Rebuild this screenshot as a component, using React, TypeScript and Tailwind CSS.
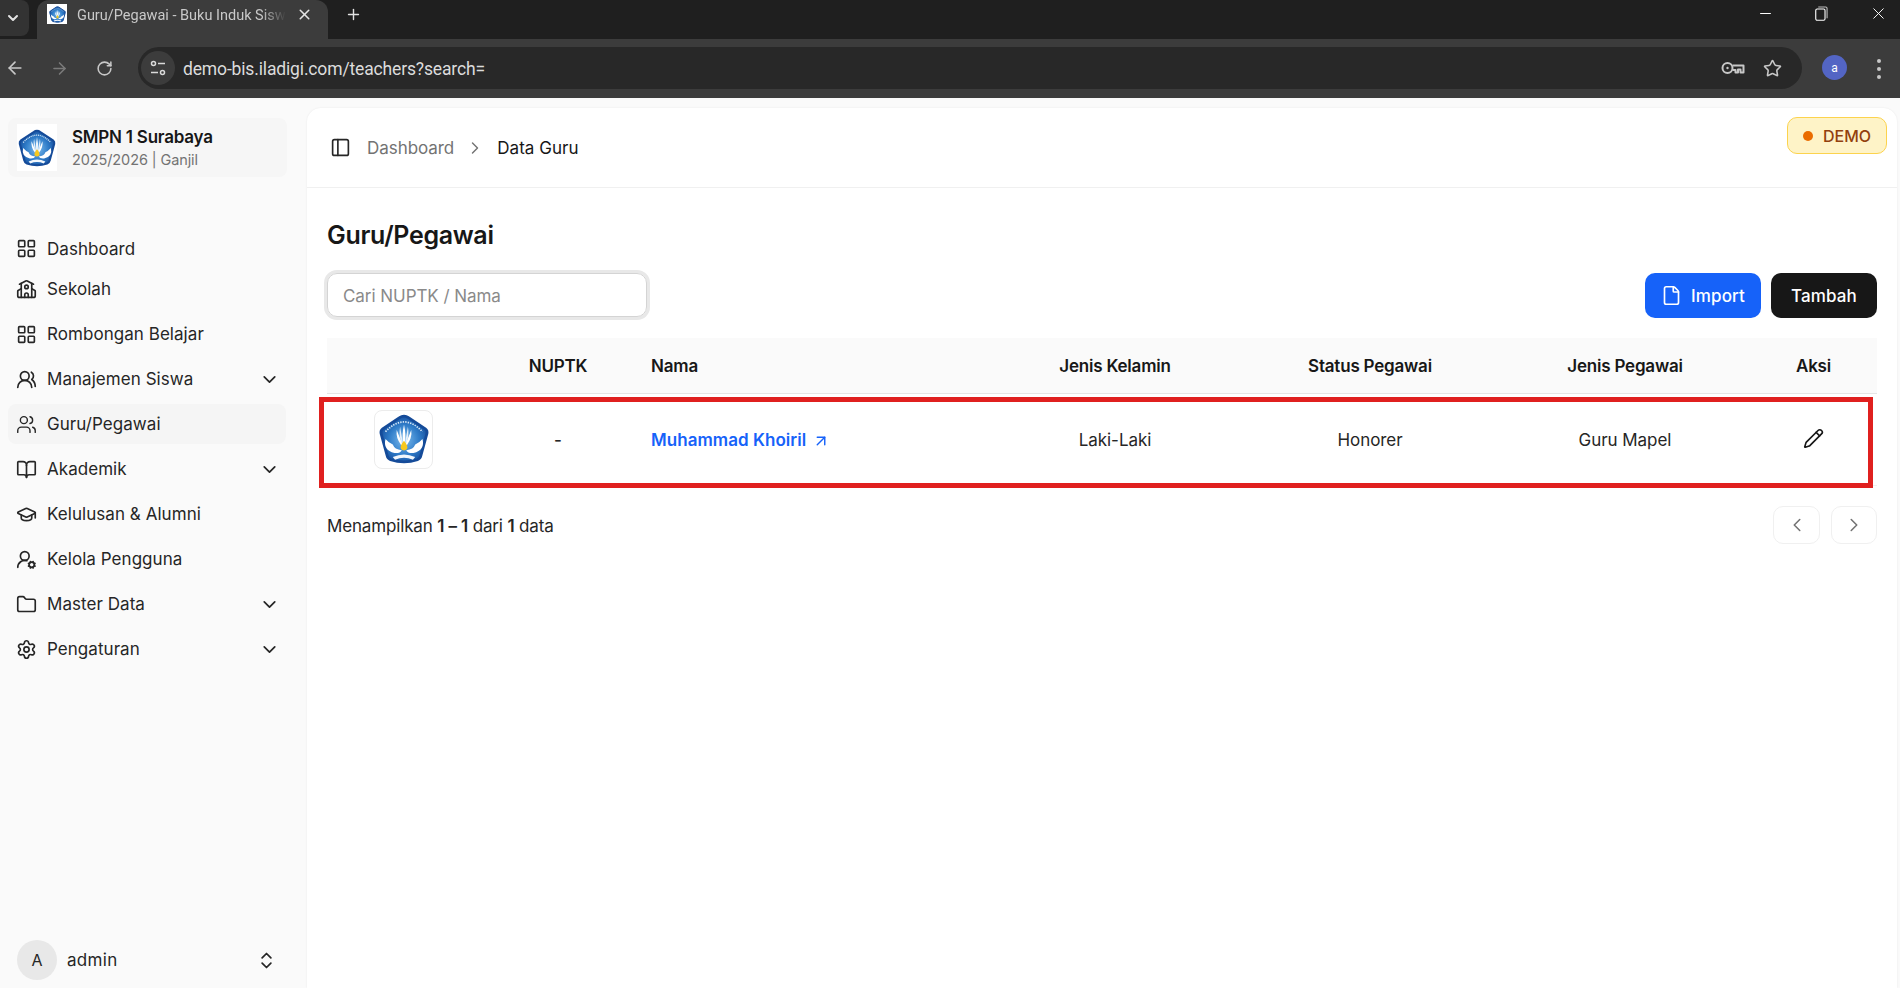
import {
  ArrowLeft,
  ArrowRight,
  ArrowUpRight,
  BookOpen,
  ChevronDown,
  ChevronLeft,
  ChevronRight,
  ChevronsUpDown,
  File,
  Folder,
  GraduationCap,
  LayoutGrid,
  Minus,
  PanelLeft,
  Pencil,
  Plus,
  RotateCw,
  School,
  Settings,
  Star,
  UserRoundCog,
  Users,
  UsersRound,
  X,
} from "lucide-react"
import type { ComponentType } from "react"

const sans = "font-['Inter','Liberation_Sans',sans-serif]"

type NavItem = {
  label: string
  icon: ComponentType<{ className?: string; strokeWidth?: number }>
  chevron?: boolean
  active?: boolean
  short?: boolean
}

const navItems: NavItem[] = [
  { label: "Dashboard", icon: LayoutGrid, short: true },
  { label: "Sekolah", icon: School },
  { label: "Rombongan Belajar", icon: LayoutGrid },
  { label: "Manajemen Siswa", icon: UsersRound, chevron: true },
  { label: "Guru/Pegawai", icon: Users, active: true },
  { label: "Akademik", icon: BookOpen, chevron: true },
  { label: "Kelulusan & Alumni", icon: GraduationCap },
  { label: "Kelola Pengguna", icon: UserRoundCog },
  { label: "Master Data", icon: Folder, chevron: true },
  { label: "Pengaturan", icon: Settings, chevron: true },
]

function TutWuriLogo({ className }: { className?: string }) {
  return (
    <svg viewBox="0 0 100 100" className={className}>
      <defs>
        <radialGradient id="shield" cx="50%" cy="52%" r="55%">
          <stop offset="0%" stopColor="#7dbcee" />
          <stop offset="60%" stopColor="#2f7cc8" />
          <stop offset="100%" stopColor="#164f9e" />
        </radialGradient>
      </defs>
      <path
        d="M50 9 Q54 9 58 12 L88 32 Q92 35 91 40 L80 80 Q79 85 74 87 Q50 95 26 87 Q21 85 20 80 L9 40 Q8 35 12 32 L42 12 Q46 9 50 9 Z"
        fill="url(#shield)"
        stroke="#154b99"
        strokeWidth="5"
      />
      <path d="M17 37 Q50 2 83 37" fill="none" stroke="#d6e8f7" strokeWidth="3" strokeDasharray="2.5 2" />
      <path d="M37 34 Q35 48 45 61 L48 61 Z" fill="#fff" />
      <path d="M50 24 Q46 42 48.5 59 L51.5 59 Q54 42 50 24 Z" fill="#fff" />
      <path d="M63 34 Q65 48 55 61 L52 61 Z" fill="#fff" />
      <path d="M43 28 Q40 44 46.5 60 L48.5 60 Z M57 28 Q60 44 53.5 60 L51.5 60 Z" fill="#e6eff8" />
      <path d="M50 53 Q58 62 55.5 68 Q50 73 44.5 68 Q42 62 50 53 Z" fill="#f6c81e" />
      <path d="M17 50 Q12 70 33 75 Q43 76 46 70 Q33 69 30 60 Q23 57 17 50 Z" fill="#fff" />
      <path d="M83 50 Q88 70 67 75 Q57 76 54 70 Q67 69 70 60 Q77 57 83 50 Z" fill="#fff" />
      <path d="M30 82 Q50 73 70 82 L66 87 Q50 80 34 87 Z" fill="#f2f7fc" />
    </svg>
  )
}

function KeyIcon() {
  return (
    <svg viewBox="0 0 24 14" className="h-[14px] w-[24px]" fill="none" stroke="#c7c7c7" strokeWidth="2">
      <circle cx="6.5" cy="7" r="5" />
      <circle cx="6.5" cy="7" r="1.2" fill="#c7c7c7" strokeWidth="0" />
      <path d="M11.5 4.5 H22.5 V11.5 H19.5 V8.5 H17 V11.5 H14.5 V9 H11.5" strokeLinejoin="round" />
    </svg>
  )
}

function RestoreIcon() {
  return (
    <svg viewBox="0 0 14 16" className="h-[15px] w-[13px]" fill="none" stroke="#fff" strokeWidth="1.2">
      <rect x="0.8" y="3.2" width="10" height="12" rx="1.5" />
      <path d="M3.5 1 H11.5 Q13 1 13 2.5 V13" stroke="#bdbdbd" />
    </svg>
  )
}

function TuneIcon() {
  return (
    <svg viewBox="0 0 16 16" className="h-4 w-4" fill="none" stroke="#dadada" strokeWidth="1.5">
      <circle cx="3.5" cy="3.5" r="2" />
      <path d="M8 3.5 H15 M1 12.5 H8" />
      <circle cx="12.5" cy="12.5" r="2" />
    </svg>
  )
}

function BrowserChrome() {
  return (
    <div className="shrink-0 font-['Roboto','Liberation_Sans',sans-serif] text-[#e3e3e3]">
      <div className="flex h-[39px] items-end bg-[#1f1f1f]">
        <div className="mb-[3px] flex h-[36px] w-[29px] items-center justify-start rounded-r-lg bg-[#333333] pl-[5px]">
          <ChevronDown className="h-4 w-4 text-[#e3e3e3]" strokeWidth={3} />
        </div>
        <div className="ml-[8px] flex h-[39px] w-[291px] items-center rounded-t-xl bg-[#3c3c3c] pb-[11px] pl-[10px] pr-[15px]">
          <div className="flex h-[20px] w-[20px] shrink-0 items-center justify-center bg-white">
            <TutWuriLogo className="h-[19px] w-[19px]" />
          </div>
          <span className="ml-[10px] w-[209px] overflow-hidden whitespace-nowrap pt-[3px] text-[14.5px] text-[#c9c9c9] [mask-image:linear-gradient(to_right,black_88%,transparent)]">
            Guru/Pegawai - Buku Induk Siswa
          </span>
          <X className="ml-auto h-[17px] w-[17px] shrink-0 text-[#e3e3e3]" strokeWidth={2.2} />
        </div>
        <Plus className="mb-[16px] ml-[17px] h-[17px] w-[17px] text-[#e3e3e3]" strokeWidth={2} />
        <div className="mb-[16px] ml-auto flex items-center gap-[40px] pr-[12px]">
          <Minus className="mr-[1px] h-[17px] w-[17px] text-white" strokeWidth={1.4} />
          <RestoreIcon />
          <X className="ml-[1px] h-[19px] w-[19px] text-white" strokeWidth={1.2} />
        </div>
      </div>
      <div className="flex h-[59px] items-start bg-[#3c3c3c] pt-[8px]">
        <div className="flex h-[42px] w-[138px] shrink-0 items-center pl-[5px]">
          <ArrowLeft className="h-[20px] w-[20px] text-[#c7c7c7]" strokeWidth={2} />
          <ArrowRight className="ml-[25px] h-[19px] w-[19px] text-[#7a7a7a]" strokeWidth={2} />
          <RotateCw className="ml-[27px] h-[17px] w-[17px] text-[#c7c7c7]" strokeWidth={2.2} />
        </div>
        <div className="flex h-[42px] w-[1664px] items-center rounded-full bg-[#282828] pl-[3px] pr-[20px]">
          <div className="flex h-[34px] w-[34px] items-center justify-center rounded-full bg-[#3c3c3c]">
            <TuneIcon />
          </div>
          <span className="ml-[8px] pt-[2px] text-[17.5px] tracking-[-0.15px] text-[#dcdcdc]">demo-bis.iladigi.com/teachers?search=</span>
          <div className="ml-auto flex items-center gap-[18px]">
            <KeyIcon />
            <Star className="h-[19px] w-[19px] text-[#c7c7c7]" strokeWidth={2} />
          </div>
        </div>
        <div className="ml-[20px] mt-[8px] flex h-[25px] w-[25px] items-center justify-center rounded-full bg-[#5365c4] text-[12px] text-white">
          a
        </div>
        <div className="ml-[30px] mt-[12px] flex flex-col gap-[4px]">
          <span className="h-[4px] w-[4px] rounded-full bg-[#c7c7c7]" />
          <span className="h-[4px] w-[4px] rounded-full bg-[#c7c7c7]" />
          <span className="h-[4px] w-[4px] rounded-full bg-[#c7c7c7]" />
        </div>
      </div>
    </div>
  )
}

function Sidebar() {
  return (
    <aside className="flex w-[307px] shrink-0 flex-col px-2 pb-2 pt-[20px]">
      <div className="flex h-[59px] w-[279px] items-center gap-[15px] rounded-lg bg-[#f6f6f6] pl-[9px]">
        <div className="flex h-[47px] w-[40px] items-center justify-center bg-white">
          <TutWuriLogo className="h-[42px] w-[42px] shrink-0" />
        </div>
        <div>
          <div className="text-[17px] font-semibold leading-[21px] tracking-[-0.22px] text-[#171717]">SMPN 1 Surabaya</div>
          <div className="pt-[2px] text-[14.5px] leading-[19px] tracking-[-0.1px] text-[#737373]">2025/2026 | Ganjil</div>
        </div>
      </div>
      <nav className="mt-[55px] flex flex-col gap-[5px]">
        {navItems.map((item) => {
          const Icon = item.icon
          return (
            <div
              key={item.label}
              className={`flex w-[278px] items-center rounded-lg pl-[8px] pr-[6px] ${item.short ? "h-[32px]" : "h-[40px]"} ${item.active ? "bg-[#f5f5f5]" : ""}`}
            >
              <Icon className="h-[21px] w-[21px] shrink-0 text-[#262626]" strokeWidth={item.active ? 1.6 : 1.9} />
              <span className={`ml-[10px] text-[17px] tracking-[0.05px] text-[#262626] ${item.short ? "pt-[3px]" : "pt-[1px]"}`}>{item.label}</span>
              {item.chevron && <ChevronDown className="ml-auto h-[21px] w-[21px] text-[#262626]" strokeWidth={2} />}
            </div>
          )
        })}
      </nav>
      <div className="mt-auto flex items-center pl-[9px] pr-[22px]">
        <div className="flex h-[40px] w-[40px] items-center justify-center rounded-full bg-[#e8e8e8] text-[16px] text-[#262626]">A</div>
        <span className="ml-[10px] pt-[1px] text-[17px] tracking-[0.3px] text-[#262626]">admin</span>
        <ChevronsUpDown className="ml-auto h-[21px] w-[21px] text-[#262626]" strokeWidth={2} />
      </div>
    </aside>
  )
}

function Toolbar() {
  return (
    <div className="mt-[22px] flex items-start justify-between">
      <div className="flex h-[44px] w-[320px] items-center rounded-[10px] border border-[#d4d4d4] pl-[15px] shadow-[0_0_0_3px_#e8e8e8]">
        <span className="pt-[4px] text-[17px] tracking-[-0.05px] text-[#8a8a8a]">Cari NUPTK / Nama</span>
      </div>
      <div className="flex gap-[10px]">
        <button className="flex h-[45px] w-[116px] items-center justify-center gap-[9px] rounded-[10px] bg-[#1662f9] pt-[3px] text-[17px] font-medium tracking-[0.1px] text-white">
          <File className="-mt-[3px] h-[21px] w-[21px]" strokeWidth={1.9} />
          Import
        </button>
        <button className="flex h-[45px] w-[106px] items-center justify-center rounded-[10px] bg-[#171717] pt-[3px] text-[17px] font-medium tracking-[0.1px] text-white">
          Tambah
        </button>
      </div>
    </div>
  )
}

function TeacherTable() {
  const th = "h-[55px] pt-[3px] text-center text-[17px] font-semibold tracking-[-0.2px] text-[#171717]"
  const td = "pt-[3px] text-center text-[17px] tracking-[-0.05px] text-[#262626]"
  return (
    <div className="relative mt-[20px]">
      <table className="w-full table-fixed border-collapse">
        <thead>
          <tr className="border-b border-[#e5e5e5] bg-[#fafafa]">
            <th className={`${th} w-[153px]`} />
            <th className={`${th} w-[156px]`}>NUPTK</th>
            <th className={`${th} w-[351px] !text-left pl-[15px]`}>Nama</th>
            <th className={`${th} w-[256px]`}>Jenis Kelamin</th>
            <th className={`${th} w-[254px]`}>Status Pegawai</th>
            <th className={`${th} w-[256px]`}>Jenis Pegawai</th>
            <th className={`${th} pr-[3px]`}>Aksi</th>
          </tr>
        </thead>
        <tbody>
          <tr className="h-[92px] border-b border-[#f0f0f0]">
            <td className="text-center">
              <div className="mx-auto flex h-[59px] w-[59px] items-center justify-center rounded-lg border border-[#ececec]">
                <TutWuriLogo className="h-[56px] w-[56px]" />
              </div>
            </td>
            <td className={`${td} font-medium`}>-</td>
            <td className={`${td} !text-left pl-[15px]`}>
              <span className="inline-flex items-center font-semibold tracking-[0.05px] text-[#1662f9]">
                Muhammad Khoiril
                <ArrowUpRight className="ml-[6px] h-[18px] w-[18px]" strokeWidth={1.9} />
              </span>
            </td>
            <td className={td}>Laki-Laki</td>
            <td className={td}>Honorer</td>
            <td className={td}>Guru Mapel</td>
            <td className="pr-[3px] text-center">
              <Pencil className="mx-auto -mt-[2px] h-[21px] w-[21px] text-[#171717]" strokeWidth={1.9} />
            </td>
          </tr>
        </tbody>
      </table>
      {/* anotasi merah di atas baris */}
      <div className="pointer-events-none absolute -left-[8px] right-[4px] top-[59px] h-[91px] border-[5px] border-[#e0201f]" />
    </div>
  )
}

function Pagination() {
  return (
    <div className="mt-[20px] flex items-center justify-between">
      <p className="pt-[4px] text-[17px] tracking-[-0.15px] text-[#262626]">
        Menampilkan <b className="font-semibold">1 – 1</b> dari <b className="font-semibold">1</b> data
      </p>
      <div className="flex gap-[11px]">
        <button className="flex h-[38px] w-[47px] items-center justify-center rounded-[10px] border border-[#f0f0f0] text-[#737373]">
          <ChevronLeft className="h-[22px] w-[22px]" strokeWidth={1.7} />
        </button>
        <button className="flex h-[38px] w-[46px] items-center justify-center rounded-[10px] border border-[#f0f0f0] text-[#737373]">
          <ChevronRight className="h-[22px] w-[22px]" strokeWidth={1.7} />
        </button>
      </div>
    </div>
  )
}

export default function App() {
  return (
    <div className={`flex h-screen flex-col overflow-hidden bg-[#fafafa] ${sans}`}>
      <BrowserChrome />
      <div className="flex min-h-0 flex-1">
        <Sidebar />
        <div className="flex-1 pr-[3px] pt-[10px]">
          <main className="h-full rounded-t-[14px] bg-white shadow-[0_0_2px_rgba(0,0,0,0.08)]">
            <header className="flex h-[80px] items-start border-b border-[#f0f0f0] pl-[23px] pr-[10px]">
              <div className="flex h-[79px] items-center">
                <PanelLeft className="h-[21px] w-[21px] text-[#262626]" strokeWidth={1.9} />
                <span className="ml-[16px] pt-[2px] text-[17px] tracking-[-0.05px] text-[#737373]">Dashboard</span>
                <ChevronRight className="ml-[11px] h-[20px] w-[20px] text-[#737373]" strokeWidth={1.7} />
                <span className="ml-[12px] pt-[2px] text-[17px] tracking-[0.05px] text-[#171717]">Data Guru</span>
              </div>
              <div className="ml-auto mt-[9px] flex h-[37px] w-[100px] items-center justify-center gap-[10px] rounded-[10px] border border-[#fcd34d] bg-[#fef3c7] text-[16px] font-medium text-[#92400e]">
                <span className="h-[10px] w-[10px] rounded-full bg-[#ea6c00]" />
                DEMO
              </div>
            </header>
            <div className="pl-[20px] pr-[20px] pt-[31px]">
              <h1 className="text-[25px] font-semibold leading-[32px] tracking-[-0.32px] text-[#171717]">Guru/Pegawai</h1>
              <Toolbar />
              <TeacherTable />
              <Pagination />
            </div>
          </main>
        </div>
      </div>
    </div>
  )
}
